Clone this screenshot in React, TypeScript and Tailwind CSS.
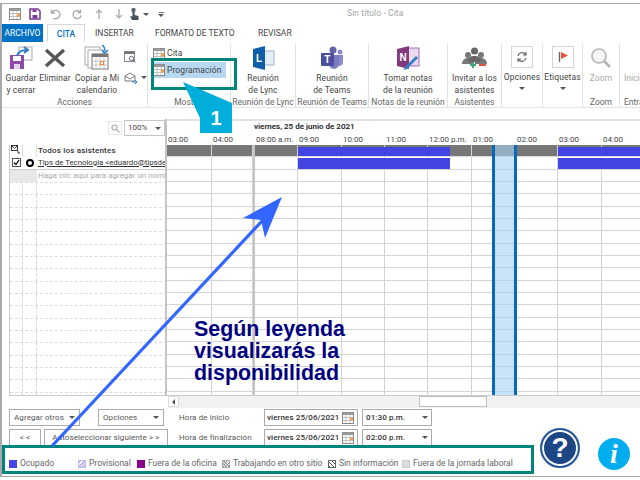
import React from 'react';

const hours = [
  { label: '03:00', w: 45 },
  { label: '04:00', w: 41 },
  { label: '', w: 2, gap: true },
  { label: '08:00 a.m.', w: 43 },
  { label: '09:00', w: 44 },
  { label: '10:00', w: 43 },
  { label: '11:00', w: 43 },
  { label: '12:00 p.m.', w: 44 },
  { label: '01:00', w: 44 },
  { label: '02:00', w: 42 },
  { label: '03:00', w: 44 },
  { label: '04:00', w: 44 },
];

const rows = Array.from({ length: 21 }, (_, i) => i);

const CalendarIcon = ({ size = 12 }: { size?: number }) => (
  <svg width={size} height={size} viewBox="0 0 12 12" className="shrink-0">
    <rect x="0.5" y="0.5" width="11" height="11" fill="#fff" stroke="#8a8a8a" />
    <rect x="0.5" y="0.5" width="11" height="2.5" fill="#9a9a9a" />
    <path d="M4 3v8M8 3v8M1 5.5h10M1 8.5h10" stroke="#b5b5b5" strokeWidth="0.8" />
    <rect x="8" y="5.5" width="3" height="3" fill="#f0a050" />
  </svg>
);

const Chevron = () => <span className="w-0 h-0 border-x-[3px] border-x-transparent border-t-[3px] border-t-[#555] inline-block" />;

const Group = ({ w, label, children }: { w: number; label: string; children: React.ReactNode }) => (
  <div className="flex flex-col items-center shrink-0 border-r border-[#e1e1e1] mt-[2px] overflow-hidden" style={{ width: w }}>
    <div className="flex-1 w-full flex justify-center">{children}</div>
    <div className="text-[8.5px] leading-[10px] text-[#666] whitespace-nowrap h-[10px]">{label}</div>
  </div>
);

const BigButton = ({ icon, lines, muted }: { icon: React.ReactNode; lines: string[]; muted?: boolean }) => (
  <div className={`flex flex-col items-center ${muted ? 'text-[#aaa]' : 'text-[#444]'}`}>
    <div className="h-[28px] flex items-center justify-center">{icon}</div>
    <div className="text-[8.5px] leading-[12px] tracking-[0.1px] text-center whitespace-nowrap">
      {lines.map((l) => (
        <div key={l}>{l}</div>
      ))}
    </div>
  </div>
);

const Swatch = ({ className }: { className: string }) => <span className={`w-[8px] h-[8px] shrink-0 ${className}`} />;

const LegendItem = ({ w, swatch, text }: { w: number; swatch: string; text: string }) => (
  <div className="flex items-center gap-[3px] shrink-0" style={{ width: w }}>
    <Swatch className={swatch} />
    <span className="text-[8.5px] text-[#666] whitespace-nowrap">{text}</span>
  </div>
);

const Field = ({ className, children }: { className: string; children: React.ReactNode }) => (
  <div className={`h-[17px] shrink-0 border border-[#ababab] bg-white flex items-center text-[8px] tracking-[0.1px] text-[#333] whitespace-nowrap ${className}`}>{children}</div>
);

export default function App() {
  return (
    <div className="relative w-[640px] h-[480px] overflow-hidden bg-white pt-[3px] font-['Roboto',sans-serif]">
      <div className="h-[474px] border-t border-b border-l-2 border-[#a9a9a9] flex flex-col">
        {/* title bar */}
        <div className="h-[20px] flex items-center relative shrink-0">
          <div className="flex items-center ml-[7px]">
            <CalendarIcon />
            <svg width="12" height="12" viewBox="0 0 12 12" className="ml-[8px]">
              <path d="M1 1h8l2 2v8H1z" fill="none" stroke="#7b3f98" strokeWidth="1.6" />
              <rect x="3.5" y="7" width="5" height="3.5" fill="#7b3f98" />
              <rect x="3.5" y="1.5" width="4" height="2.5" fill="#7b3f98" />
            </svg>
            <svg width="12" height="12" viewBox="0 0 12 12" className="ml-[9px]" fill="none" stroke="#a8a8a8" strokeWidth="1.3">
              <path d="M1.5 1.5v3.5H5M1.8 5a4.2 4.2 0 1 1 1.5 5" />
            </svg>
            <svg width="12" height="12" viewBox="0 0 12 12" className="ml-[9px]" fill="none" stroke="#a8a8a8" strokeWidth="1.3">
              <path d="M9.5 1.5v3h-3M9.5 4.5a4 4 0 1 0 .5 3" />
            </svg>
            <svg width="10" height="12" viewBox="0 0 10 12" className="ml-[11px]" fill="none" stroke="#b0b0b0" strokeWidth="1.4">
              <path d="M5 11V2M2 5l3-3 3 3" />
            </svg>
            <svg width="10" height="12" viewBox="0 0 10 12" className="ml-[10px]" fill="none" stroke="#b0b0b0" strokeWidth="1.4">
              <path d="M5 1v9M2 7l3 3 3-3" />
            </svg>
            <svg width="11" height="14" viewBox="0 0 11 14" className="ml-[5px]">
              <circle cx="4.5" cy="3" r="2.2" fill="#5a6670" />
              <path d="M3.5 4h2v4l4 1v4H3L1 9l2.5 .5z" fill="#47525c" />
            </svg>
            <span className="ml-[3px] flex"><Chevron /></span>
            <span className="ml-[9px] flex flex-col items-center gap-[1px]">
              <span className="w-[5px] h-px bg-[#777]" />
              <Chevron />
            </span>
          </div>
          <span className="absolute left-[345px] top-[3px] text-[8.5px] tracking-[0.1px] text-[#a5a5a5] whitespace-nowrap">Sin título - Cita</span>
        </div>

        {/* tabs */}
        <div className="h-[18px] flex items-stretch shrink-0 text-[8.5px] leading-[18px] text-[#444]">
          <div className="w-[41px] bg-[#0072c6] text-white text-center">ARCHIVO</div>
          <div className="ml-[4px] w-[38px] border-x border-t border-[#d8d8d8] text-[#0072c6] text-center font-medium">CITA</div>
          <div className="ml-[10px] w-[60px]">INSERTAR</div>
          <div className="w-[103px]">FORMATO DE TEXTO</div>
          <div>REVISAR</div>
        </div>

        {/* ribbon */}
        <div className="h-[66px] flex border-b border-[#e4e4e4] shrink-0">
          <Group w={146} label="Acciones">
            <div className="flex items-start w-full pl-[3px]">
              <div className="w-[32px]">
                <BigButton
                  lines={['Guardar', 'y cerrar']}
                  icon={
                    <svg width="24" height="24" viewBox="0 0 24 24">
                      <rect x="10" y="1" width="13" height="13" fill="#fff" stroke="#aaa" />
                      <path d="M1 9h14v14H1z" fill="#8e4aa8" />
                      <rect x="4" y="10" width="8" height="5" fill="#fff" />
                      <rect x="5" y="18" width="6" height="5" fill="#e6d5ee" />
                      <path d="M8 10c1-4 5-6 10-6M15 1l4 3-4 3" fill="none" stroke="#2f7fc4" strokeWidth="2" />
                    </svg>
                  }
                />
              </div>
              <div className="w-[34px] ml-[1px]">
                <BigButton
                  lines={['Eliminar']}
                  icon={
                    <svg width="22" height="22" viewBox="0 0 22 22">
                      <path d="M2 3l18 16M20 3L2 19" stroke="#555" strokeWidth="3.4" />
                    </svg>
                  }
                />
              </div>
              <div className="w-[46px] ml-[2px]">
                <BigButton
                  lines={['Copiar a Mi', 'calendario']}
                  icon={
                    <svg width="26" height="26" viewBox="0 0 26 26">
                      <rect x="1" y="2" width="15" height="18" fill="#fff" stroke="#aaa" />
                      <rect x="4" y="5" width="15" height="18" fill="#fff" stroke="#aaa" />
                      <rect x="8" y="9" width="16" height="15" fill="#fff" stroke="#777" />
                      <rect x="8" y="9" width="16" height="3" fill="#777" />
                      <path d="M12 12v12M16 12v12M20 12v12M8 16h16M8 20h16" stroke="#bbb" strokeWidth="0.8" />
                      <rect x="16.5" y="16.5" width="3" height="3" fill="#fff" stroke="#e88a3a" />
                      <path d="M18 0c2 1 3 3 3 6M18 5l3 3 3-3" fill="none" stroke="#2f7fc4" strokeWidth="1.6" />
                    </svg>
                  }
                />
              </div>
              <div className="ml-[4px] flex flex-col gap-[8px] pt-[7px]">
                <svg width="12" height="12" viewBox="0 0 12 12">
                  <rect x="0.5" y="0.5" width="10" height="10" fill="#fff" stroke="#888" />
                  <rect x="0.5" y="0.5" width="10" height="2.5" fill="#777" />
                  <circle cx="7.5" cy="7.5" r="2.2" fill="#fff" stroke="#667" />
                  <path d="M9 9l2.5 2.5" stroke="#667" />
                </svg>
                <div className="flex items-center gap-[3px]">
                  <svg width="14" height="13" viewBox="0 0 14 13" fill="none">
                    <path d="M1 5l5-3 5 3v5H1z" stroke="#777" />
                    <path d="M1 5l5 3 5-3" stroke="#777" />
                    <path d="M8 11h5M11 9l2 2-2 2" stroke="#2f7fc4" />
                  </svg>
                  <Chevron />
                </div>
              </div>
            </div>
          </Group>
          <Group w={83} label="Mostrar">
            <div className="w-full pl-[3px] pt-[2px] text-[8.5px] tracking-[0.1px] text-[#444]">
              <div className="h-[15px] flex items-center gap-[2px] pl-[2px]">
                <CalendarIcon />
                <span>Cita</span>
              </div>
              <div className="h-[16px] mt-px w-[75px] bg-[#b6d8f1] flex items-center gap-[2px] pl-[2px]">
                <CalendarIcon />
                <span>Programación</span>
              </div>
            </div>
          </Group>
          <Group w={65} label="Reunión de Lync">
            <BigButton
              lines={['Reunión', 'de Lync']}
              icon={
                <svg width="24" height="24" viewBox="0 0 24 24">
                  <rect x="11" y="5" width="12" height="14" fill="#e4eef7" stroke="#9bb5d0" />
                  <path d="M2 3l12-3v24L2 21z" fill="#0f5fa8" />
                  <text x="5" y="16" fontSize="10" fontWeight="700" fill="#fff" fontFamily="Liberation Sans">L</text>
                </svg>
              }
            />
          </Group>
          <Group w={73} label="Reunión de Teams">
            <BigButton
              lines={['Reunión', 'de Teams']}
              icon={
                <svg width="24" height="24" viewBox="0 0 24 24">
                  <circle cx="13" cy="4" r="3.5" fill="#6264a7" />
                  <circle cx="20" cy="6" r="2.5" fill="#8b8cc7" />
                  <path d="M15 9h8v7a4 4 0 0 1-8 0z" fill="#8b8cc7" />
                  <path d="M9 9h10v9a5 5 0 0 1-10 0z" fill="#7b7dc0" />
                  <rect x="1" y="7" width="13" height="13" rx="1" fill="#4b4f9e" />
                  <text x="4.2" y="17" fontSize="10" fontWeight="700" fill="#fff" fontFamily="Liberation Sans">T</text>
                </svg>
              }
            />
          </Group>
          <Group w={79} label="Notas de la reunión">
            <BigButton
              lines={['Tomar notas', 'de la reunión']}
              icon={
                <svg width="24" height="24" viewBox="0 0 24 24">
                  <rect x="10" y="2" width="13" height="18" fill="#e9d8ee" stroke="#a36fb5" />
                  <path d="M1 3l12-3v23L1 20z" fill="#80397b" />
                  <text x="3.5" y="15" fontSize="10" fontWeight="700" fill="#fff" fontFamily="Liberation Sans">N</text>
                  <path d="M8 24l3-1 11-11-2-2L9 21z" fill="#2f7fc4" />
                </svg>
              }
            />
          </Group>
          <Group w={54} label="Asistentes">
            <BigButton
              lines={['Invitar a los', 'asistentes']}
              icon={
                <svg width="25" height="22" viewBox="0 0 25 22">
                  <circle cx="6" cy="8" r="3" fill="#777" />
                  <circle cx="19" cy="8" r="3" fill="#777" />
                  <circle cx="12.500" cy="4" r="3.500" fill="#666" />
                  <path d="M0 17c0-4 3-6 6-6s6 2 6 6zM13 17c0-4 3-6 6-6s6 2 6 6z" fill="#777" />
                  <path d="M6 15c0-5 3-6 6.500-6s6.500 1 6.500 6z" fill="#666" />
                  <path d="M11 15v6M8 18h6" stroke="#3fa37c" strokeWidth="2" />
                  <path d="M17 18h7" stroke="#d9553f" strokeWidth="2" />
                </svg>
              }
            />
          </Group>
          <Group w={41} label="">
            <div className="flex flex-col items-center text-[8.5px] tracking-[0.1px] text-[#444]">
              <div className="mt-[2px] w-[22px] h-[22px] border border-[#d4d4d4] flex items-center justify-center">
                <svg width="12" height="12" viewBox="0 0 12 12" fill="none" stroke="#666" strokeWidth="1.2">
                  <path d="M2 5a4 4 0 0 1 7-2l1 1M10 7a4 4 0 0 1-7 2L2 8" />
                  <path d="M10 1v3H7M2 11V8h3" />
                </svg>
              </div>
              <span className="mt-[3px] leading-[12px]">Opciones</span>
              <span className="mt-[4px] flex"><Chevron /></span>
            </div>
          </Group>
          <Group w={40} label="">
            <div className="flex flex-col items-center text-[8.5px] tracking-[0.1px] text-[#444]">
              <div className="mt-[2px] w-[22px] h-[22px] border border-[#d4d4d4] flex items-center justify-center">
                <svg width="12" height="12" viewBox="0 0 12 12">
                  <path d="M2.500 1v10" stroke="#666" strokeWidth="1.4" />
                  <path d="M4 1l7 3.500L4 8z" fill="#e2553d" />
                </svg>
              </div>
              <span className="mt-[3px] leading-[12px]">Etiquetas</span>
              <span className="mt-[4px] flex"><Chevron /></span>
            </div>
          </Group>
          <Group w={37} label="Zoom">
            <BigButton
              muted
              lines={['Zoom']}
              icon={
                <svg width="22" height="22" viewBox="0 0 22 22" fill="none" stroke="#b5b5b5" strokeWidth="1.6">
                  <circle cx="9" cy="9" r="7" fill="#f6f6f6" />
                  <path d="M14 14l6 6" strokeWidth="2.6" />
                </svg>
              }
            />
          </Group>
          <div className="w-[20px] mt-[2px] overflow-hidden text-[8.5px] text-[#aaa] pl-[4px] flex flex-col">
            <div className="h-[28px] shrink-0" />
            <div className="leading-[12px] whitespace-nowrap">Inicio</div>
            <div className="flex-1" />
            <div className="h-[10px] leading-[10px] text-[#666] whitespace-nowrap">Entrada</div>
          </div>
        </div>

        <div className="h-[11px] shrink-0" />

        {/* scheduling */}
        <div className="h-[277px] flex shrink-0">
          <div className="w-[165px] shrink-0 flex flex-col">
            <div className="h-[26px] flex justify-end items-start gap-[2px] pr-[2px] pt-[1px]">
              <div className="w-[14px] h-[14px] mt-px border border-[#e4e4e4] flex items-center justify-center">
                <svg width="9" height="9" viewBox="0 0 9 9" fill="none" stroke="#aaa" strokeWidth="1.2">
                  <circle cx="3.500" cy="3.500" r="2.500" />
                  <path d="M5.500 5.500L8.500 8.500" />
                </svg>
              </div>
              <div className="w-[41px] h-[16px] border border-[#c6c6c6] flex items-center justify-between px-[3px] text-[8px] text-[#444]">
                <span>100%</span>
                <Chevron />
              </div>
            </div>
            <div className="ml-[7px] flex-1 overflow-hidden border-l border-b border-[#c8ccd0] w-[158px]">
              <div className="h-[12.33px] flex items-center">
                <div className="w-[13px] h-full border-r border-[#ddd] relative">
                  <svg width="9" height="9" viewBox="0 0 9 9" className="ml-[1px]">
                    <rect x="0.5" y="0.5" width="6" height="5" fill="none" stroke="#333" />
                    <path d="M1 1l2.500 2.500L6 1M6 7h2v2" stroke="#333" fill="none" />
                  </svg>
                </div>
                <div className="w-[14px] h-full border-r border-[#ddd]" />
                <div className="pl-[1px] text-[8px] tracking-[0.2px] font-medium text-[#333] leading-[12px]">Todos los asistentes</div>
              </div>
              <div className="h-[12.33px] flex items-center border-b border-[#ccc]">
                <div className="w-[13px] h-full flex items-center justify-center">
                  <div className="w-[9px] h-[9px] border border-[#555] flex items-center justify-center">
                    <svg width="7" height="7" viewBox="0 0 7 7" fill="none" stroke="#111" strokeWidth="1.3">
                      <path d="M1 3.500l2 2 3-4.500" />
                    </svg>
                  </div>
                </div>
                <div className="w-[14px] h-full flex items-center justify-center">
                  <span className="w-[8px] h-[8px] rounded-full border-[2.5px] border-black" />
                </div>
                <div className="pl-[1px] w-[128px] overflow-hidden whitespace-nowrap underline text-[7.8px] text-[#333] leading-[12px]">Tips de Tecnologia &lt;eduardo@tipsdeTecnologia.com&gt;</div>
              </div>
              <div className="h-[12.33px] flex items-center">
                <div className="w-[27px] h-full bg-[#e8e8e8]" />
                <div className="pl-[1px] w-[128px] overflow-hidden whitespace-nowrap text-[8px] text-[#a8a8a8] leading-[12px]">Haga clic aquí para agregar un nombre</div>
              </div>
              {rows.map((r) => (
                <div key={r} className="h-[12.33px] flex border-t border-dashed border-[#dcdcdc]">
                  <div className="w-[13px] border-r border-dashed border-[#dcdcdc]" />
                  <div className="w-[14px] border-r border-dashed border-[#dcdcdc]" />
                </div>
              ))}
            </div>
          </div>

          <div className="flex-1 min-w-0 flex flex-col border-l-2 border-[#c4c4c4] -ml-[2px] overflow-hidden">
            <div className="h-[26px] shrink-0 border-t-2 border-[#e2e2e2] relative w-[473px]">
              <div className="text-[8px] leading-[12px] font-semibold text-[#222] pl-[87px] whitespace-nowrap">viernes, 25 de junio de 2021</div>
              <div className="flex text-[8px] leading-[12px] text-[#444] mt-px">
                {hours.map((h, i) => (
                  <div key={i} className="whitespace-nowrap pl-px shrink-0" style={{ width: h.w }}>
                    {h.label}
                  </div>
                ))}
              </div>
            </div>
            <div className="relative h-[250px] shrink-0 overflow-hidden w-[473px]">
              {rows.map((r) => (
                <div key={r} className="h-[12.33px] flex">
                  {hours.map((h, i) => (
                    <div
                      key={i}
                      className={h.gap ? 'bg-[#c4c4c4] shrink-0' : `shrink-0 border-r border-b border-[#d4d4d4] ${r === 0 ? 'bg-[#777] border-b-[#dcdcdc]' : ''}`}
                      style={{ width: h.w }}
                    />
                  ))}
                </div>
              ))}
              {/* busy blocks and the selected slot sit over the grid */}
              <div className="absolute left-[131px] top-[2px] w-[152px] h-[9px] bg-[#4444e0]" />
              <div className="absolute left-[131px] top-[13px] w-[152px] h-[11px] bg-[#4444e0]" />
              <div className="absolute left-[391px] top-[2px] w-[90px] h-[9px] bg-[#4444e0]" />
              <div className="absolute left-[391px] top-[13px] w-[90px] h-[11px] bg-[#4444e0]" />
              <div className="absolute left-[325px] top-0 bottom-0 w-[25px] bg-[#a6d0f2]/60 border-x-[3px] border-x-[#0a68b8]" />
            </div>
            <div className="h-[1px] shrink-0 bg-[#c8ccd0]" />
          </div>
        </div>

        {/* footer */}
        <div className="relative flex-1 min-h-0">
          <div className="h-[12px] ml-[166px] bg-[#f1f1f1] flex relative">
            <div className="w-[11px] h-[11px] bg-white border border-[#ddd] flex items-center justify-center">
              <span className="w-0 h-0 border-y-[3px] border-y-transparent border-r-[3px] border-r-[#555]" />
            </div>
            <div className="ml-[240px] w-[68px] h-[11px] bg-white border border-[#c0c0c0]" />
          </div>
          <div className="flex items-center mt-[1px] ml-[7px]">
            <Field className="w-[71px] justify-between px-[4px] text-[#555]">
              <span>Agregar otros</span>
              <Chevron />
            </Field>
            <Field className="ml-[18px] w-[66px] justify-between px-[4px] text-[#555]">
              <span>Opciones</span>
              <Chevron />
            </Field>
            <span className="ml-[15px] w-[85px] shrink-0 text-[8px] tracking-[0.1px] text-[#555] whitespace-nowrap">Hora de inicio</span>
            <Field className="w-[94px] justify-between pl-[2px] pr-[3px] font-medium">
              <span>viernes 25/06/2021</span>
              <CalendarIcon />
            </Field>
            <Field className="ml-[4px] w-[70px] justify-between px-[3px] font-medium">
              <span>01:30 p.m.</span>
              <Chevron />
            </Field>
          </div>
          <div className="flex items-center mt-[3px] ml-[7px]">
            <Field className="w-[32px] justify-center text-[#555]">&lt; &lt;</Field>
            <Field className="ml-[3px] w-[124px] justify-center text-[#555]">Autoseleccionar siguiente &gt; &gt;</Field>
            <span className="ml-[11px] w-[85px] shrink-0 text-[8px] tracking-[0.1px] text-[#555] whitespace-nowrap">Hora de finalización</span>
            <Field className="w-[94px] justify-between pl-[2px] pr-[3px] font-medium">
              <span>viernes 25/06/2021</span>
              <CalendarIcon />
            </Field>
            <Field className="ml-[4px] w-[70px] justify-between px-[3px] font-medium">
              <span>02:00 p.m.</span>
              <Chevron />
            </Field>
          </div>
          <div className="flex items-center mt-[11px] ml-[7px] h-[13px]">
            <LegendItem w={69} swatch="bg-[#4444e8]" text="Ocupado" />
            <LegendItem w={59} swatch="bg-[repeating-linear-gradient(135deg,#b9bdf0_0px,#b9bdf0_2px,#fff_2px,#fff_3px)] border border-[#b9bdf0]" text="Provisional" />
            <LegendItem w={85} swatch="bg-[#8b008b]" text="Fuera de la oficina" />
            <LegendItem w={106} swatch="bg-[repeating-linear-gradient(45deg,#999_0px,#999_1px,#fff_1px,#fff_2px)] border border-[#aaa]" text="Trabajando en otro sitio" />
            <LegendItem w={74} swatch="bg-[repeating-linear-gradient(45deg,#444_0px,#444_1px,#fff_1px,#fff_3px)] border border-[#666]" text="Sin información" />
            <LegendItem w={130} swatch="bg-[#ddd] border border-[#ccc]" text="Fuera de la jornada laboral" />
          </div>
        </div>
      </div>

      {/* tutorial annotations painted over the screenshot */}
      <div className="absolute left-[151px] top-[58px] w-[86px] h-[32px] border-[3px] border-[#00847c]" />
      <div className="absolute left-[2px] top-[445px] w-[532px] h-[29px] border-[3px] border-[#00847c]" />

      <svg className="absolute inset-0 pointer-events-none" width="640" height="480" viewBox="0 0 640 480">
        <polygon points="183,82 232,103 232,133 200,133 200,118" fill="#00aedb" />
        <line x1="52" y1="446" x2="262" y2="221" stroke="#3366ff" strokeWidth="3.2" />
        <polygon points="282,197 265,238 261,220 243,218" fill="#3366ff" />
      </svg>
      <div className="absolute left-[200px] top-[102px] w-[32px] h-[32px] flex items-center justify-center text-white font-bold text-[20px] font-['Liberation_Sans',sans-serif]">1</div>

      <div className="absolute left-[194px] top-[318px] text-[21.4px] leading-[22px] font-bold text-[#00007f] font-['Liberation_Sans',sans-serif] whitespace-nowrap">
        <div>Según leyenda</div>
        <div>visualizarás la</div>
        <div>disponibilidad</div>
      </div>

      <div className="absolute left-[540px] top-[428px] w-[40px] h-[40px] rounded-full bg-[#1d4684] border-[2px] border-[#2a5aa0] flex items-center justify-center shadow-[inset_0_0_0_2px_#fff]">
        <span className="text-white font-bold text-[28px] leading-none font-['Liberation_Sans',sans-serif]">?</span>
      </div>
      <div className="absolute left-[598px] top-[438px] w-[32px] h-[32px] rounded-full bg-[#00aeef] flex items-center justify-center">
        <span className="text-white font-bold italic text-[28px] leading-none font-['Liberation_Serif',serif]">i</span>
      </div>
    </div>
  );
}
